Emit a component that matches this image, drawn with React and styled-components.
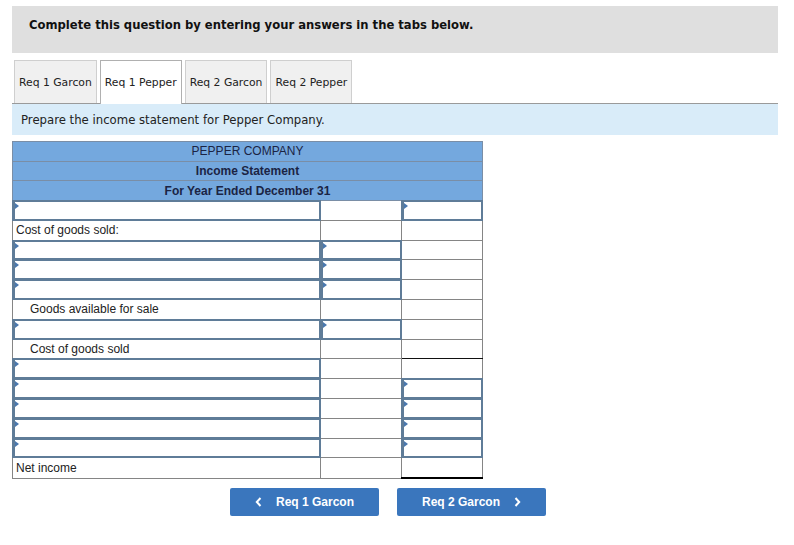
import React from "react";
import styled, { createGlobalStyle } from "styled-components";

const Global = createGlobalStyle`
  html, body { margin: 0; padding: 0; background: #fff; }
  body { font-family: "DejaVu Sans", Verdana, sans-serif; }
`;

const Page = styled.div`
  padding: 6px 16px 0 12px;
  width: 766px;
`;

const Instructions = styled.div`
  background: #dfdfdf;
  height: 47px;
  box-sizing: border-box;
  padding: 12px 17px 0;
  font-family: "DejaVu Sans", Verdana, sans-serif;
  font-weight: bold;
  font-size: 11.6px;
  color: #111;
`;

const TabBar = styled.div`
  display: flex;
  gap: 3px;
  margin-top: 7px;
  padding-left: 2px;
`;

const Tab = styled.div`
  box-sizing: border-box;
  display: flex;
  align-items: center;
  padding: 0 4px;
  font-family: "DejaVu Sans", Verdana, sans-serif;
  font-size: 10.8px;
  color: #222;
  background: ${(p) => (p.$active ? "#fff" : "#f0f0f0")};
  border: 1px solid ${(p) => (p.$active ? "#b0b0b0" : "#cfcfcf")};
  border-bottom: none;
  position: relative;
  margin-bottom: ${(p) => (p.$active ? "-1px" : "0")};
  height: ${(p) => (p.$active ? "44px" : "43px")};
  z-index: 1;
`;

const Prompt = styled.div`
  border-top: 1px solid #9a9a9a;
  background: #d9ecf9;
  height: 32px;
  box-sizing: border-box;
  padding: 0 9px;
  display: flex;
  align-items: center;
  font-family: "DejaVu Sans", Verdana, sans-serif;
  font-size: 11.7px;
  color: #222;
`;

const Sheet = styled.table`
  margin-top: 6px;
  border-collapse: collapse;
  width: 470px;
  table-layout: fixed;
  font-family: "Liberation Sans", Arial, sans-serif;
  font-size: 12px;
`;

const HeadCell = styled.td`
  background: #74a8de;
  border: 1px solid #7a8ea6;
  height: 18.7px;
  padding: 0;
  text-align: center;
  color: #1b2444;
  font-weight: ${(p) => (p.$bold ? "bold" : "normal")};
  line-height: 18px;
`;

const Cell = styled.td`
  border: 1px solid #858585;
  border-bottom: ${(p) =>
    p.$under === "double"
      ? "2px solid #000"
      : p.$under === "single"
      ? "1px solid #111"
      : "1px solid #858585"};
  height: 18.8px;
  padding: 0;
  position: relative;
  color: #222;
  line-height: 18px;
`;

const Label = styled.div`
  padding-left: ${(p) => (p.$indent ? "17px" : "3px")};
  white-space: nowrap;
`;

const Field = styled.div`
  position: absolute;
  inset: -1px;
  border: 2px solid #5f7c98;
  border-left-width: 3px;
`;

const Marker = styled.span`
  position: absolute;
  left: 0;
  top: 1px;
  width: 0;
  height: 0;
  border-top: 3px solid transparent;
  border-bottom: 3px solid transparent;
  border-left: 4px solid #4a78ae;
`;

const Nav = styled.div`
  display: flex;
  gap: 18px;
  margin-top: 9px;
  padding-left: 218px;
`;

const NavButton = styled.button`
  width: 149px;
  height: 28px;
  border: none;
  border-radius: 2px;
  background: #3a76bd;
  color: #fff;
  font-family: "Liberation Sans", Arial, sans-serif;
  font-weight: bold;
  font-size: 12px;
  display: flex;
  align-items: center;
  justify-content: center;
  gap: 14px;
  padding: 0;
  cursor: pointer;
`;

const Chevron = ({ dir }) => (
  <svg width="7" height="10" viewBox="0 0 7 10">
    <path
      d={dir === "left" ? "M5.5 1 L1.8 5 L5.5 9" : "M1.5 1 L5.2 5 L1.5 9"}
      fill="none"
      stroke="#fff"
      strokeWidth="2"
    />
  </svg>
);

const Input = () => (
  <Field>
    <Marker />
  </Field>
);

const rows = [
  { c1: "in", c2: null, c3: "in" },
  { label: "Cost of goods sold:" },
  { c1: "in", c2: "in" },
  { c1: "in", c2: "in" },
  { c1: "in", c2: "in", u2: "single" },
  { label: "Goods available for sale", indent: true },
  { c1: "in", c2: "in", u2: "single" },
  { label: "Cost of goods sold", indent: true, u3: "single" },
  { c1: "in" },
  { c1: "in", c3: "in" },
  { c1: "in", c3: "in" },
  { c1: "in", c3: "in" },
  { c1: "in", c3: "in" },
  { label: "Net income", u3: "double" },
];

export default function App() {
  return (
    <>
      <Global />
      <Page>
        <Instructions>Complete this question by entering your answers in the tabs below.</Instructions>
        <TabBar>
          <Tab>Req 1 Garcon</Tab>
          <Tab $active>Req 1 Pepper</Tab>
          <Tab>Req 2 Garcon</Tab>
          <Tab>Req 2 Pepper</Tab>
        </TabBar>
        <Prompt>Prepare the income statement for Pepper Company.</Prompt>
        <Sheet>
          <colgroup>
            <col style={{ width: 308 }} />
            <col style={{ width: 81 }} />
            <col style={{ width: 81 }} />
          </colgroup>
          <tbody>
            <tr>
              <HeadCell colSpan={3}>PEPPER COMPANY</HeadCell>
            </tr>
            <tr>
              <HeadCell colSpan={3} $bold>Income Statement</HeadCell>
            </tr>
            <tr>
              <HeadCell colSpan={3} $bold>For Year Ended December 31</HeadCell>
            </tr>
            {rows.map((r, i) => (
              <tr key={i}>
                <Cell>
                  {r.label ? <Label $indent={r.indent}>{r.label}</Label> : r.c1 === "in" ? <Input /> : null}
                </Cell>
                <Cell $under={r.u2}>{r.c2 === "in" ? <Input /> : null}</Cell>
                <Cell $under={r.u3}>{r.c3 === "in" ? <Input /> : null}</Cell>
              </tr>
            ))}
          </tbody>
        </Sheet>
        <Nav>
          <NavButton>
            <Chevron dir="left" />
            <span>Req 1 Garcon</span>
          </NavButton>
          <NavButton>
            <span>Req 2 Garcon</span>
            <Chevron dir="right" />
          </NavButton>
        </Nav>
      </Page>
    </>
  );
}
